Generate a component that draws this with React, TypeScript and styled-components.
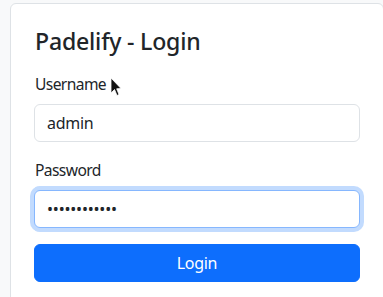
import React from "react";
import styled, { createGlobalStyle } from "styled-components";

const Global = createGlobalStyle`
  html, body { margin: 0; padding: 0; }
  body {
    background: #f8f9fa;
    font-family: "Noto Sans", "Liberation Sans", sans-serif;
    color: #212529;
    overflow: hidden;
  }
  * { box-sizing: border-box; }
`;

const Page = styled.div`
  position: relative;
  width: 383px;
  height: 297px;
  overflow: hidden;
  padding: 3px 0 0 10px;
`;

const Card = styled.div`
  width: 374px;
  background: #fff;
  border: 1px solid #dee2e6;
  border-radius: 6px;
  padding: 24px 23px 24px 23px;
`;

const Title = styled.h3`
  margin: 0 0 16px;
  font-size: 23.1px;
  font-weight: 500;
  line-height: 1.2;
  padding-left: 1px;
  letter-spacing: -0.2px;
`;

const Field = styled.div`
  margin-bottom: 16px;
`;

const Label = styled.label`
  display: block;
  font-size: 15.6px;
  line-height: 24px;
  margin-bottom: 8px;
  padding-left: 1px;
  letter-spacing: -0.6px;
`;

const Input = styled.input<{ $focused?: boolean }>`
  display: block;
  width: 326px;
  height: 38px;
  padding: 6px 12px;
  font-family: inherit;
  font-size: 16px;
  letter-spacing: ${(p) => (p.$focused ? "-0.2px" : "-0.3px")};
  color: #212529;
  background: #fff;
  border: 1px solid ${(p) => (p.$focused ? "#86b7fe" : "#dee2e6")};
  border-radius: 6px;
  outline: none;
  box-shadow: ${(p) => (p.$focused ? "0 0 0 4px rgba(13,110,253,.25)" : "none")};
`;

const Button = styled.button`
  display: block;
  width: 326px;
  height: 38px;
  background: #0d6efd;
  color: #fff;
  border: 1px solid #0d6efd;
  border-radius: 6px;
  font-family: inherit;
  font-size: 16px;
  line-height: 24px;
  letter-spacing: -0.3px;
`;

const Cursor = styled.svg`
  position: absolute;
  left: 110px;
  top: 77px;
`;

export default function App() {
  return (
    <>
      <Global />
      <Page>
        <Card>
          <Title>Padelify - Login</Title>
          <Field>
            <Label>Username</Label>
            <Input defaultValue="admin" />
          </Field>
          <Field>
            <Label>Password</Label>
            <Input type="password" defaultValue="secretpasswd" $focused />
          </Field>
          <Button>Login</Button>
        </Card>
        <Cursor width="12" height="20" viewBox="0 0 12 20">
          <path d="M1 1 L1 16 L4.5 12.5 L7 18.5 L9 17.5 L6.7 11.8 L11 11.5 Z" fill="#111" stroke="#fff" strokeWidth="0.8" strokeLinejoin="round" />
        </Cursor>
      </Page>
    </>
  );
}
